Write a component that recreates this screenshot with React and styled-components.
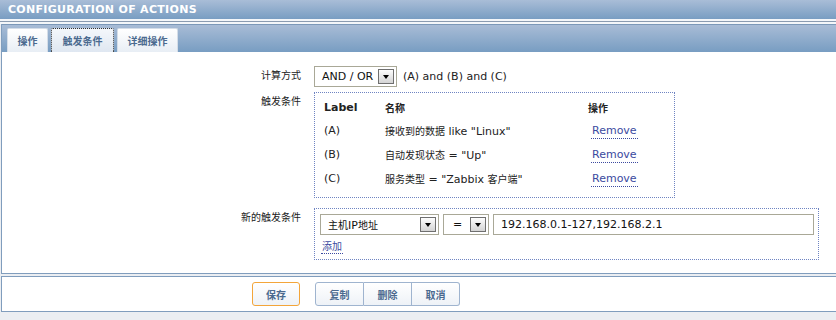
import React from 'react';
import styled, { createGlobalStyle } from 'styled-components';

const GlobalStyle = createGlobalStyle`
  body {
    margin: 0;
    background: #ebeef2;
    font-family: "DejaVu Sans", "Noto Sans CJK SC", sans-serif;
    font-size: 11px;
    color: #111;
  }
`;

const Page = styled.div`
  width: 836px;
  overflow: hidden;
`;

const Header = styled.div`
  height: 19px;
  line-height: 19px;
  padding-left: 8px;
  background: linear-gradient(#a9bdd7, #789dc2);
  color: #fff;
  font-weight: bold;
  font-size: 11px;
  letter-spacing: 0.3px;
`;

const Divider = styled.div`
  height: 1px;
  background: #8a9bb0;
  border-top: 2px solid #f3f6f9;
  border-bottom: 2px solid #f3f6f9;
`;

const Panel = styled.div`
  margin-left: 1px;
  border-left: 1px solid #809dbd;
  border-bottom: 1px solid #809dbd;
  background: #fff;
`;

const TabBar = styled.div`
  height: 28px;
  box-sizing: border-box;
  border-top: 1px solid #7b98b8;
  padding: 4px 0 0 5px;
  display: flex;
  align-items: flex-end;
  gap: 3px;
  background: linear-gradient(#a8bcd6, #789dc2);
`;

const Tab = styled.div`
  width: ${p => p.$w}px;
  height: 24px;
  box-sizing: border-box;
  display: flex;
  align-items: center;
  justify-content: center;
  border-radius: 2px 2px 0 0;
  border: 1px solid ${p => (p.$active ? '#333' : '#d4dde8')};
  border-style: ${p => (p.$active ? 'dotted' : 'solid')};
  border-bottom: none;
  background: ${p => (p.$active
    ? 'linear-gradient(#f4f7fb, #dfe7f1)'
    : 'linear-gradient(#ffffff, #e8eef5)')};
  color: #4b6a8f;
  font-weight: bold;
  font-size: 10px;
`;

const Content = styled.div`
  height: 221px;
  box-sizing: border-box;
  padding-top: 14px;
`;

const Form = styled.div`
  display: grid;
  grid-template-columns: 299px auto;
  column-gap: 13px;
  align-items: start;
`;

const Label = styled.div`
  text-align: right;
  font-size: 10px;
  line-height: 14px;
  padding-top: 3px;
  margin-top: ${p => p.$top || 0}px;
  color: #222;
`;

const Field = styled.div`
  display: flex;
  align-items: center;
  margin-top: ${p => p.$top || 0}px;
`;

const Select = styled.div`
  width: ${p => p.$w}px;
  height: 21px;
  box-sizing: border-box;
  border: 1px solid #a9a897;
  background: #fff;
  display: flex;
  align-items: center;
  justify-content: space-between;
  padding: 0 2px 0 ${p => p.$pl || 7}px;
  flex-shrink: 0;
`;

const Arrow = styled.span`
  width: 16px;
  height: 15px;
  box-sizing: border-box;
  border: 1px solid #6f6f6f;
  background: linear-gradient(#fdfdfd, #d4d4d4);
  display: flex;
  align-items: center;
  justify-content: center;
  &::after {
    content: '';
    border-left: 3.5px solid transparent;
    border-right: 3.5px solid transparent;
    border-top: 4px solid #000;
  }
`;

const Hint = styled.span`
  margin-left: 6px;
  color: #222;
`;

const Box = styled.div`
  width: ${p => p.$w}px;
  box-sizing: border-box;
  border: 1px dotted #6f84c2;
  padding: ${p => p.$pad};
`;

const Table = styled.div`
  display: grid;
  grid-template-columns: 61px 203px auto;
  grid-template-rows: 22px;
  grid-auto-rows: 24px;
  align-items: center;
  & > :nth-child(-n + 3) {
    font-weight: bold;
  }
`;

const Cell = styled.div`
  color: #222;
`;

const Han = styled.span`
  font-size: 10px;
`;

const Link = styled.a`
  color: #3b4aa0;
  text-decoration: none;
  border-bottom: 1px dotted #3b4aa0;
  padding: 0 1px 1px;
  margin-left: ${p => p.$ml || 0}px;
  font-size: ${p => p.$fs || 11}px;
`;

const Inputs = styled.div`
  display: flex;
  gap: 4px;
`;

const Input = styled.div`
  width: 321px;
  height: 21px;
  box-sizing: border-box;
  border: 1px solid #a9a897;
  padding-left: 7px;
  line-height: 19px;
  color: #111;
`;

const AddRow = styled.div`
  margin-top: 5px;
  padding-left: 1px;
  line-height: 14px;
`;

const Footer = styled.div`
  margin: 2px 0 0 1px;
  border: 1px solid #809dbd;
  border-right: none;
  background: #fff;
  padding: 5px 0 5px 250px;
  display: flex;
  align-items: center;
`;

const Button = styled.div`
  width: ${p => p.$w || 48}px;
  height: 24px;
  box-sizing: border-box;
  display: flex;
  align-items: center;
  justify-content: center;
  border: 1px solid ${p => (p.$primary ? '#f3a53a' : '#9fb4cf')};
  border-radius: 3px;
  background: linear-gradient(#ffffff, #eef2f7);
  color: #4b6a8f;
  font-weight: bold;
  font-size: 10px;
  margin-right: ${p => p.$mr || 0}px;
`;

const Group = styled.div`
  display: flex;
  & > div {
    border-radius: 0;
  }
  & > div + div {
    border-left: none;
  }
  & > div:first-child {
    border-radius: 3px 0 0 3px;
  }
  & > div:last-child {
    border-radius: 0 3px 3px 0;
  }
`;

const conditions = [
  { label: '(A)', han: '接收到的数据', rest: ' like "Linux"' },
  { label: '(B)', han: '自动发现状态', rest: ' = "Up"' },
  { label: '(C)', han: '服务类型', rest: ' = "Zabbix ', tail: '客户端', end: '"' },
];

export default function App() {
  return (
    <Page>
      <GlobalStyle />
      <Header>CONFIGURATION OF ACTIONS</Header>
      <Divider />
      <Panel>
        <TabBar>
          <Tab $w={41}>操作</Tab>
          <Tab $w={63} $active>触发条件</Tab>
          <Tab $w={61}>详细操作</Tab>
        </TabBar>
        <Content>
          <Form>
            <Label>计算方式</Label>
            <Field>
              <Select $w={83}>
                <span>AND / OR</span>
                <Arrow />
              </Select>
              <Hint>(A) and (B) and (C)</Hint>
            </Field>

            <Label $top={5}>触发条件</Label>
            <Field $top={5}>
              <Box $w={361} $pad="3px 0 7px 9px">
                <Table>
                  <Cell>Label</Cell>
                  <Cell><Han>名称</Han></Cell>
                  <Cell><Han>操作</Han></Cell>
                  {conditions.map(c => (
                    <React.Fragment key={c.label}>
                      <Cell>{c.label}</Cell>
                      <Cell>
                        <Han>{c.han}</Han>{c.rest}
                        {c.tail && <Han>{c.tail}</Han>}
                        {c.end}
                      </Cell>
                      <Cell><Link href="#" $ml={3}>Remove</Link></Cell>
                    </React.Fragment>
                  ))}
                </Table>
              </Box>
            </Field>

            <Label $top={10}>新的触发条件</Label>
            <Field $top={10}>
              <Box $w={505} $pad="5px 4px 5px 5px">
                <Inputs>
                  <Select $w={119}>
                    <span><Han>主机</Han>IP<Han>地址</Han></span>
                    <Arrow />
                  </Select>
                  <Select $w={46} $pl={9}>
                    <span>=</span>
                    <Arrow />
                  </Select>
                  <Input>192.168.0.1-127,192.168.2.1</Input>
                </Inputs>
                <AddRow>
                  <Link href="#" $fs={10}>添加</Link>
                </AddRow>
              </Box>
            </Field>
          </Form>
        </Content>
      </Panel>
      <Footer>
        <Button $primary $mr={15}>保存</Button>
        <Group>
          <Button $w={49}>复制</Button>
          <Button>删除</Button>
          <Button>取消</Button>
        </Group>
      </Footer>
    </Page>
  );
}
